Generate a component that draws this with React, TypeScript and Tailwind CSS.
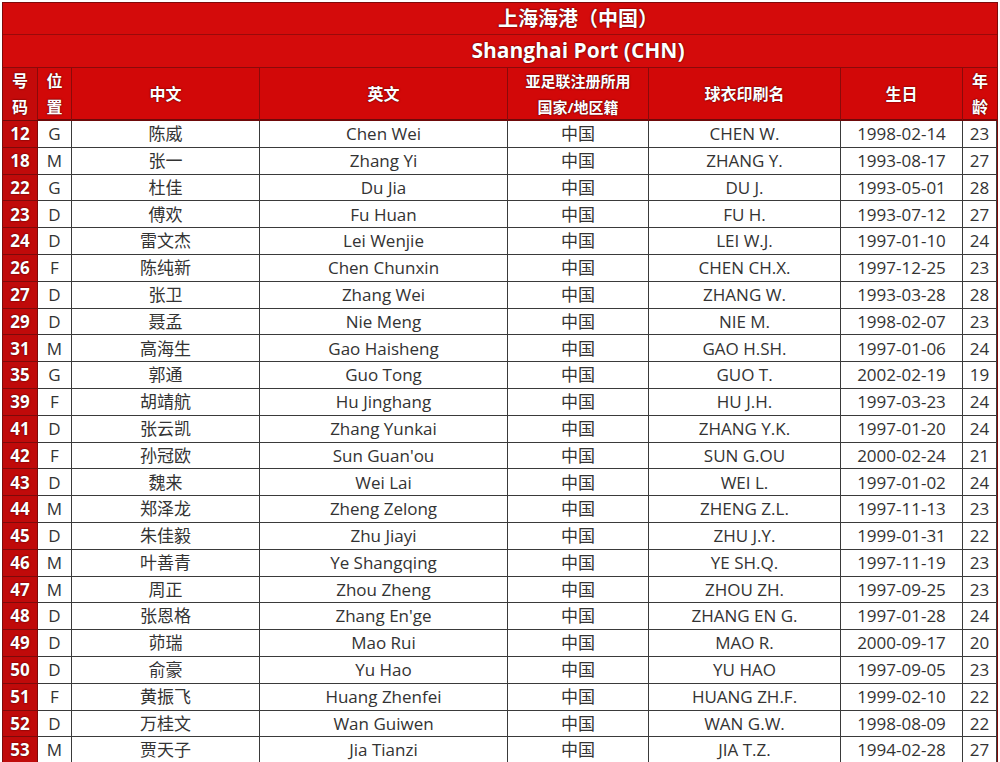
const rows: [string, string, string, string, string, string, string][] = [
    ["12", "G", "陈威", "Chen Wei", "CHEN W.", "1998-02-14", "23"],
    ["18", "M", "张一", "Zhang Yi", "ZHANG Y.", "1993-08-17", "27"],
    ["22", "G", "杜佳", "Du Jia", "DU J.", "1993-05-01", "28"],
    ["23", "D", "傅欢", "Fu Huan", "FU H.", "1993-07-12", "27"],
    ["24", "D", "雷文杰", "Lei Wenjie", "LEI W.J.", "1997-01-10", "24"],
    ["26", "F", "陈纯新", "Chen Chunxin", "CHEN CH.X.", "1997-12-25", "23"],
    ["27", "D", "张卫", "Zhang Wei", "ZHANG W.", "1993-03-28", "28"],
    ["29", "D", "聂孟", "Nie Meng", "NIE M.", "1998-02-07", "23"],
    ["31", "M", "高海生", "Gao Haisheng", "GAO H.SH.", "1997-01-06", "24"],
    ["35", "G", "郭通", "Guo Tong", "GUO T.", "2002-02-19", "19"],
    ["39", "F", "胡靖航", "Hu Jinghang", "HU J.H.", "1997-03-23", "24"],
    ["41", "D", "张云凯", "Zhang Yunkai", "ZHANG Y.K.", "1997-01-20", "24"],
    ["42", "F", "孙冠欧", "Sun Guan'ou", "SUN G.OU", "2000-02-24", "21"],
    ["43", "D", "魏来", "Wei Lai", "WEI L.", "1997-01-02", "24"],
    ["44", "M", "郑泽龙", "Zheng Zelong", "ZHENG Z.L.", "1997-11-13", "23"],
    ["45", "D", "朱佳毅", "Zhu Jiayi", "ZHU J.Y.", "1999-01-31", "22"],
    ["46", "M", "叶善青", "Ye Shangqing", "YE SH.Q.", "1997-11-19", "23"],
    ["47", "M", "周正", "Zhou Zheng", "ZHOU ZH.", "1997-09-25", "23"],
    ["48", "D", "张恩格", "Zhang En'ge", "ZHANG EN G.", "1997-01-28", "24"],
    ["49", "D", "茆瑞", "Mao Rui", "MAO R.", "2000-09-17", "20"],
    ["50", "D", "俞豪", "Yu Hao", "YU HAO", "1997-09-05", "23"],
    ["51", "F", "黄振飞", "Huang Zhenfei", "HUANG ZH.F.", "1999-02-10", "22"],
    ["52", "D", "万桂文", "Wan Guiwen", "WAN G.W.", "1998-08-09", "22"],
    ["53", "M", "贾天子", "Jia Tianzi", "JIA T.Z.", "1994-02-28", "27"],
];

const cols = "grid grid-cols-[35px_34px_188px_248px_141px_192px_122px_1fr]";
const shadow = "[text-shadow:0_0_2px_#5c0000,0_0_1px_#5c0000]";

export default function App() {
    return (
        <div className="w-[1000px] h-[762px] overflow-hidden bg-white pt-[2px] pl-[2px] pr-[2px] font-['Open_Sans','Noto_Sans_CJK_SC',sans-serif]">
            <div className="border-l border-r border-t border-[#7d0a0a]">
                <div className="h-[32px] bg-[#d40b0b] border-b border-[#9a0a0a] flex items-center justify-center pl-[156px] text-white font-bold text-[20px]">
                    <span className={shadow}>上海海港（中国）</span>
                </div>
                <div className="h-[33px] bg-[#d40b0b] border-b border-[#8a0a0a] flex items-center justify-center pl-[156px] text-white font-bold text-[21px]">
                    <span className={shadow}>Shanghai Port (CHN)</span>
                </div>
                <div className={`${cols} h-[53px] bg-[#d20808] border-b-2 border-[#6e0a0a] text-white font-bold text-[16px]`}>
                    <div className={`bg-[#c40a0a] border-r border-[#8a0a0a] flex flex-col items-center justify-center leading-[26px] ${shadow}`}>
                        <span>号</span>
                        <span>码</span>
                    </div>
                    <div className={`border-r border-[#8a0a0a] flex flex-col items-center justify-center leading-[26px] ${shadow}`}>
                        <span>位</span>
                        <span>置</span>
                    </div>
                    <div className={`border-r border-[#8a0a0a] flex items-center justify-center ${shadow}`}>中文</div>
                    <div className={`border-r border-[#8a0a0a] flex items-center justify-center ${shadow}`}>英文</div>
                    <div className={`border-r border-[#8a0a0a] flex flex-col items-center justify-center leading-[26px] text-[15px] ${shadow}`}>
                        <span>亚足联注册所用</span>
                        <span>国家/地区籍</span>
                    </div>
                    <div className={`border-r border-[#8a0a0a] flex items-center justify-center ${shadow}`}>球衣印刷名</div>
                    <div className={`border-r border-[#8a0a0a] flex items-center justify-center ${shadow}`}>生日</div>
                    <div className={`flex flex-col items-center justify-center leading-[26px] ${shadow}`}>
                        <span>年</span>
                        <span>龄</span>
                    </div>
                </div>
                {rows.map((r) => (
                    <div key={r[0]} className={`${cols} h-[26.8px] text-[17px] text-[#333]`}>
                        <div className={`bg-[#c00a0a] border-r border-b border-[#7d0a0a] flex items-center justify-center text-white font-bold ${shadow}`}>
                            {r[0]}
                        </div>
                        <div className="border-r border-b border-[#3a3a3a] flex items-center justify-center">{r[1]}</div>
                        <div className="border-r border-b border-[#3a3a3a] flex items-center justify-center">{r[2]}</div>
                        <div className="border-r border-b border-[#3a3a3a] flex items-center justify-center">{r[3]}</div>
                        <div className="border-r border-b border-[#3a3a3a] flex items-center justify-center">中国</div>
                        <div className="border-r border-b border-[#3a3a3a] flex items-center justify-center">{r[4]}</div>
                        <div className="border-r border-b border-[#3a3a3a] flex items-center justify-center">{r[5]}</div>
                        <div className="border-r border-b border-[#3a3a3a] flex items-center justify-center">{r[6]}</div>
                    </div>
                ))}
            </div>
        </div>
    );
}
